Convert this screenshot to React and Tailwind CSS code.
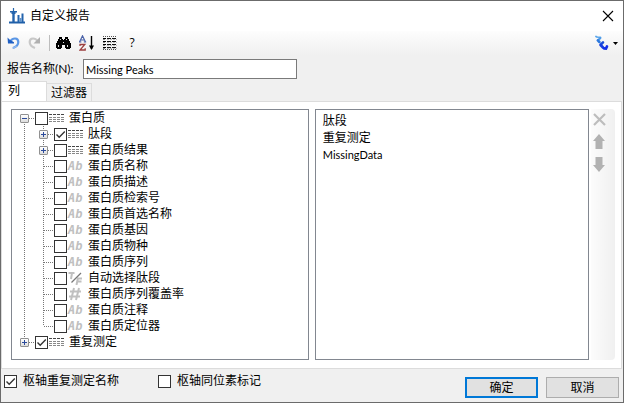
import React, { useState } from 'react';

const columns = [
  {
    label: '蛋白质',
    icon: 'table',
    open: true,
    children: [
      { label: '肽段', icon: 'table', checked: true, children: [] },
      { label: '蛋白质结果', icon: 'table', children: [] },
      { label: '蛋白质名称', icon: 'text' },
      { label: '蛋白质描述', icon: 'text' },
      { label: '蛋白质检索号', icon: 'text' },
      { label: '蛋白质首选名称', icon: 'text' },
      { label: '蛋白质基因', icon: 'text' },
      { label: '蛋白质物种', icon: 'text' },
      { label: '蛋白质序列', icon: 'text' },
      { label: '自动选择肽段', icon: 'bool' },
      { label: '蛋白质序列覆盖率', icon: 'number' },
      { label: '蛋白质注释', icon: 'text' },
      { label: '蛋白质定位器', icon: 'text' },
    ],
  },
  { label: '重复测定', icon: 'table', checked: true, children: [] },
];

const selected = ['肽段', '重复测定', 'MissingData'];

function TableIcon() {
  return (
    <svg width="15" height="10" viewBox="0 0 15 10" shapeRendering="crispEdges" aria-hidden="true">
      {[1, 4, 6, 8].map((y) => (
        <path key={y} d={`M0 ${y + 0.5}h15`} stroke={y === 1 ? '#444' : '#888'} strokeDasharray="3 1" />
      ))}
    </svg>
  );
}

function TypeIcon({ type }) {
  if (type === 'table') return <TableIcon />;
  if (type === 'bool') {
    return (
      <svg width="15" height="14" viewBox="0 0 15 14" fill="none" aria-hidden="true">
        <path d="M0.5 2h6M4 2L3 8" stroke="#c0c0c0" strokeWidth="2" />
        <path d="M8.5 14l1.3-6.5h4.2M9.5 10.5h4" stroke="#c0c0c0" strokeWidth="2" />
        <path d="M3.5 11.5L13 2" stroke="#777" strokeWidth="1.3" />
      </svg>
    );
  }
  if (type === 'number') {
    return (
      <svg width="15" height="14" viewBox="0 0 15 14" fill="none" stroke="#c0c0c0" strokeWidth="2" aria-hidden="true">
        <path d="M6 1L3 13M11 1L8 13M2 4.5h11M1 9.5h11" />
      </svg>
    );
  }
  return (
    <span className="font-['DejaVu_Sans_Mono','Liberation_Mono',monospace] text-xs leading-4 font-bold text-[#c0c0c0] italic" aria-hidden="true">
      Ab
    </span>
  );
}

function Checkbox({ id, defaultChecked }) {
  return (
    <span className="grid size-[13px] shrink-0">
      <input
        id={id}
        type="checkbox"
        defaultChecked={defaultChecked}
        className="peer col-start-1 row-start-1 size-[13px] appearance-none border border-[#333] bg-white"
      />
      <svg
        viewBox="0 0 13 13"
        className="pointer-events-none invisible col-start-1 row-start-1 size-[13px] peer-checked:visible"
        fill="none"
        stroke="#333"
        strokeWidth="1.4"
      >
        <path d="M2.5 6.5L5.2 9.2L10.8 3.6" />
      </svg>
    </span>
  );
}

// dotted vertical guide, 9px in from the left of its cell
function Guide({ up, down }) {
  const dots = 'w-px flex-1';
  const on = 'bg-[repeating-linear-gradient(to_bottom,#777_0_1px,transparent_1px_2px)]';
  return (
    <span className="ml-[9px] flex w-px flex-col">
      <span className={up ? `${dots} ${on}` : dots} />
      <span className={down ? `${dots} ${on}` : dots} />
    </span>
  );
}

function TreeNode({ node, depth, first, last }) {
  const [open, setOpen] = useState(Boolean(node.open));
  const id = `col-${node.label}`;
  return (
    <li>
      <div className="flex h-4">
        {depth > 0 && (
          <span className="flex w-[19px] shrink-0">
            <Guide up down />
          </span>
        )}
        <span className="relative flex w-5 shrink-0">
          <Guide up={depth > 0 || !first} down={!last} />
          <span className="h-px flex-1 self-center bg-[repeating-linear-gradient(to_right,#777_0_1px,transparent_1px_2px)]" />
          {node.children && (
            <button
              type="button"
              aria-label={node.label}
              aria-expanded={open}
              onClick={() => setOpen(!open)}
              className="absolute top-1 left-[5px] size-[9px] rounded-[1px] border border-[#919191] bg-linear-to-b from-white to-[#ddd]"
            >
              <svg width="7" height="7" viewBox="0 0 7 7" shapeRendering="crispEdges" stroke="#2b4a9b" className="block">
                <path d={open ? 'M1 3.5h5' : 'M1 3.5h5M3.5 1v5'} />
              </svg>
            </button>
          )}
        </span>
        <span className="flex items-center">
          <Checkbox id={id} defaultChecked={node.checked} />
          <span className="ml-px flex w-5 items-center">
            <TypeIcon type={node.icon} />
          </span>
          <label htmlFor={id} className="whitespace-nowrap">
            {node.label}
          </label>
        </span>
      </div>
      {open && node.children && (
        <ul>
          {node.children.map((child, i) => (
            <TreeNode key={child.label} node={child} depth={depth + 1} first={i === 0} last={i === node.children.length - 1} />
          ))}
        </ul>
      )}
    </li>
  );
}

function Toolbar() {
  return (
    <div className="flex h-6 items-center bg-linear-to-b from-[#fdfdfd] to-[#f0f0f0] pr-[5px] pl-1.5">
      <button type="button" aria-label="撤消" className="mr-1.5">
        <svg width="14" height="14" viewBox="0 0 14 14" fill="none">
          <path d="M3.5 5C5.5 1.8 11.3 1.2 11.3 6C11.3 9 9.5 10.8 6 12" stroke="#5b97e6" strokeWidth="2.2" />
          <path d="M9.5 10C8.5 11 7.5 11.8 5.5 12.3" stroke="#8fb8f0" strokeWidth="1.6" />
          <path d="M0.5 1.5L2.5 3.5L7 6.2V7.5H1z" fill="#1f5fc4" />
        </svg>
      </button>
      <button type="button" aria-label="恢复">
        <svg width="14" height="14" viewBox="0 0 14 14" fill="none">
          <path d="M10.5 5C8.5 1.8 2.7 1.2 2.7 6C2.7 9 4.5 10.8 8 12" stroke="#c8c8c8" strokeWidth="2.2" />
          <path d="M13 1V7.5H6.5z" fill="#b0b0b0" />
        </svg>
      </button>
      <span className="mr-1.5 ml-2 h-4 w-px bg-[#bdbdbd]" />
      <button type="button" aria-label="查找" className="mr-2">
        <svg width="15" height="12" viewBox="0 0 15 12" shapeRendering="crispEdges">
          <path d="M3 0h3v2h1v1h1V2h1V0h3v2h1v2h1v2h1v5h-1v1h-4v-1H9V8H6v3H5v1H1v-1H0V6h1V4h1V2h1z" fill="#000" />
          <path d="M2 8h1v2H2zM11 8h1v2h-1zM4 2h1v1H4zM10 2h1v1h-1zM7 5h1v1H7z" fill="#ddd" />
        </svg>
      </button>
      <button type="button" aria-label="排序" className="mr-2">
        <svg width="16" height="16" viewBox="0 0 16 16" fill="none">
          <path d="M0.5 7L3.5 0.8L6.5 7M1.8 5h3.4M0 7h2.4M4.8 7h2.4" stroke="#4a62a8" strokeWidth="1.2" />
          <path d="M1 11V9.5h4.8L1 15h5.2v-1.8" stroke="#9c3f3f" strokeWidth="1.3" />
          <path d="M12.5 1v13" stroke="#000" strokeWidth="1.4" />
          <path d="M10 10.5h5L12.5 15z" fill="#000" />
        </svg>
      </button>
      <button type="button" aria-label="列表" className="mr-2.5">
        <svg width="14" height="14" viewBox="0 0 14 14" shapeRendering="crispEdges">
          <path d="M0 .5h14" stroke="#555" strokeDasharray="1 1" />
          {[2, 5, 8, 11].map((y) => (
            <g key={y}>
              <path d={`M0 ${y}h3v1h-3z`} fill="#000" />
              <path d={`M0 ${y + 1}h2v1h-2z`} fill="#888" />
              <path d={`M4 ${y + 0.5}h10`} stroke="#111" strokeDasharray="4 1" />
              <path d={`M4 ${y + 1.5}h10`} stroke="#bbb" strokeDasharray="2 1" />
            </g>
          ))}
          <path d="M0 13.5h14" stroke="#555" strokeDasharray="1 1" />
        </svg>
      </button>
      <button type="button" className="w-2.5 font-['Open_Sans',sans-serif] text-xs">
        ?
      </button>
      <button type="button" aria-label="工具" className="ml-auto flex items-center gap-1">
        <svg width="14" height="16" viewBox="0 0 14 16" fill="none" strokeLinecap="round">
          <path d="M1 1.5l1 .6M3.4 2.4h2" stroke="#5fa8ea" strokeWidth="1.8" />
          <path d="M5.4 3L3.4 5" stroke="#4d9be8" strokeWidth="2" />
          <path d="M2.8 5.4L4.4 7" stroke="#2b78de" strokeWidth="2.6" />
          <path d="M8 7.4L6 9.4" stroke="#1c50d8" strokeWidth="2.6" />
          <path d="M5.6 10L8 12.4" stroke="#1a3fe0" strokeWidth="2.8" />
          <path d="M12 11.4L11 13.6L9 13.4" stroke="#1430e8" strokeWidth="2.6" />
        </svg>
        <svg width="5" height="3" viewBox="0 0 5 3">
          <path d="M0 0h5L2.5 3z" fill="#000" />
        </svg>
      </button>
    </div>
  );
}

function Arrow({ label, down }) {
  return (
    <button type="button" aria-label={label}>
      <svg width="12" height="15" viewBox="0 0 12 15" className={down ? 'rotate-180' : undefined}>
        <path d="M6 0L12 7H9.5V15H2.5V7H0z" fill="#b2b2b2" />
      </svg>
    </button>
  );
}

export default function App() {
  return (
    <div className="flex min-h-screen flex-col border border-[#6b6b6b] bg-[#f0f0f0] font-['Lato','Noto_Sans_CJK_SC',sans-serif] text-xs leading-4 text-black">
      <header className="flex h-[30px] items-center bg-white pr-[9px] pl-2">
        <svg width="16" height="16" viewBox="0 0 16 16" className="mr-[5px]" fill="none" aria-hidden="true">
          <path d="M0 14.5h16" stroke="#1f5fa8" strokeWidth="2" />
          <path d="M4.5 0v4" stroke="#2464ad" strokeWidth="1.2" />
          <path d="M1 3.8h7M2.5 5.2h4" stroke="#2464ad" strokeWidth="1.4" />
          <path d="M4.5 5v9" stroke="#2464ad" strokeWidth="2.4" />
          <path d="M9.5 7v7M13.5 5.5v8.5" stroke="#2464ad" strokeWidth="2" />
          <path d="M11.5 10v4" stroke="#5f92cb" strokeWidth="2" />
        </svg>
        <h1>自定义报告</h1>
        <button type="button" aria-label="关闭" className="ml-auto">
          <svg width="12" height="12" viewBox="0 0 12 12" stroke="#000" strokeWidth="1.1">
            <path d="M1 1l10 10M11 1L1 11" />
          </svg>
        </button>
      </header>
      <Toolbar />

      <div className="flex h-[26px] items-center pt-0.5 pl-1.5">
        <label htmlFor="report-name" className="w-[76px]">
          报告名称(N):
        </label>
        <input
          id="report-name"
          type="text"
          defaultValue="Missing Peaks"
          className="h-5 w-[214px] border border-[#7a7a7a] bg-white px-0.5 text-[11px]"
        />
      </div>

      <div role="tablist" className="flex items-end">
        <button type="button" role="tab" aria-selected="true" className="-mb-px flex h-[21px] w-[46px] items-start border border-b-0 border-[#dcdcdc] bg-white pt-px pl-1.5">
          列
        </button>
        <button type="button" role="tab" aria-selected="false" className="flex h-[18px] items-center border border-b-0 border-l-0 border-[#dcdcdc] px-1">
          过滤器
        </button>
      </div>

      <main className="mr-px flex flex-1 border border-[#dcdcdc] bg-white pt-[7px] pr-1.5 pb-2 pl-[9px]">
        <ul className="mr-1.5 flex-[298] border border-[#828790] pl-[3px]">
          {columns.map((node, i) => (
            <TreeNode key={node.label} node={node} depth={0} first={i === 0} last={i === columns.length - 1} />
          ))}
        </ul>
        <ul className="mr-0.5 flex-[270] border border-[#828790] pt-0.5 pl-[7px]">
          {selected.map((name) => (
            <li key={name} className="h-[17px] leading-[17px] last:text-[11px]">
              {name}
            </li>
          ))}
        </ul>
        <div className="flex w-6 flex-col items-start gap-2 rounded-r bg-linear-to-r from-[#fcfcfc] to-[#f0f0f0] pt-1 pl-0.5">
          <button type="button" aria-label="删除">
            <svg width="13" height="13" viewBox="0 0 13 13" stroke="#bdbdbd" strokeWidth="2.2">
              <path d="M1 1l11 11M12 1L1 12" />
            </svg>
          </button>
          <Arrow label="上移" />
          <Arrow label="下移" down />
        </div>
      </main>

      <footer className="flex h-[33px] items-start pr-1 pl-[3px]">
        <div className="flex items-center gap-1.5 pt-1">
          <Checkbox id="pivot-replicate" defaultChecked />
          <label htmlFor="pivot-replicate">枢轴重复测定名称</label>
        </div>
        <div className="ml-[39px] flex items-center gap-1.5 pt-1">
          <Checkbox id="pivot-isotope" />
          <label htmlFor="pivot-isotope">枢轴同位素标记</label>
        </div>
        <div className="mt-2 ml-auto flex gap-2">
          <button type="button" className="h-[21px] w-[73px] border-2 border-[#0078d7] bg-[#e1e1e1]">
            确定
          </button>
          <button type="button" className="h-[21px] w-[73px] border border-[#adadad] bg-[#e1e1e1]">
            取消
          </button>
        </div>
      </footer>
    </div>
  );
}
